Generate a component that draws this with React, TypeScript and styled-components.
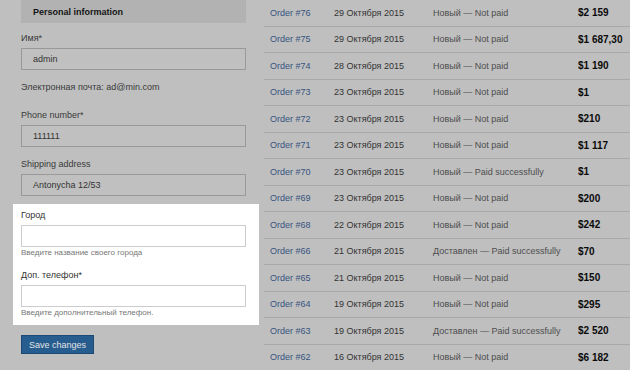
import styled, { createGlobalStyle } from 'styled-components';

const GlobalStyle = createGlobalStyle`
  html, body {
    margin: 0;
    padding: 0;
    background: #bfbfbf;
    font-family: 'Liberation Sans', Arial, sans-serif;
  }
`;

const Page = styled.div`
  display: flex;
  width: 630px;
  height: 370px;
  overflow: hidden;
  background: #bfbfbf;
`;

const Sidebar = styled.div`
  width: 246px;
  margin-left: 13px;
  display: flex;
  flex-direction: column;
`;

const Section = styled.div`
  display: flex;
  flex-direction: column;
  padding: 0 13px 0 8px;
`;

const Spotlight = styled(Section)`
  background: #ffffff;
  margin-top: 8px;
  padding-top: 4px;
  padding-bottom: 6px;
`;

const Header = styled.div`
  height: 23px;
  background: #b2b2b2;
  display: flex;
  align-items: center;
  padding-left: 12px;
  font-size: 9px;
  font-weight: bold;
  color: #141414;
  margin-bottom: 8px;
`;

const Label = styled.div<{ $gap?: number; $light?: boolean }>`
  font-size: 9px;
  line-height: 14px;
  color: ${(p) => (p.$light ? '#333333' : '#3a3a3a')};
  margin-top: ${(p) => p.$gap ?? 0}px;
  margin-bottom: 3px;
`;

const Text = styled.div<{ $gap?: number }>`
  font-size: 9px;
  line-height: 14px;
  color: #3a3a3a;
  margin-top: ${(p) => p.$gap ?? 0}px;
`;

const Input = styled.div<{ $light?: boolean }>`
  box-sizing: border-box;
  height: 22px;
  border: 1px solid ${(p) => (p.$light ? '#cccccc' : '#999999')};
  background: ${(p) => (p.$light ? '#ffffff' : '#c0c0c0')};
  display: flex;
  align-items: center;
  padding-left: 11px;
  font-size: 9px;
  color: #333333;
`;

const Hint = styled.div`
  font-size: 8px;
  line-height: 12px;
  color: #777777;
`;

const Button = styled.div`
  align-self: flex-start;
  margin: 10px 0 0 8px;
  box-sizing: border-box;
  height: 19px;
  padding: 0 7px;
  display: flex;
  align-items: center;
  background: #265c8e;
  border: 1px solid #1c4a74;
  color: #e4e4e4;
  font-size: 9px;
`;

const Table = styled.div`
  margin-left: 5px;
  flex: 1;
  display: flex;
  flex-direction: column;
`;

const Row = styled.div`
  box-sizing: border-box;
  height: 26.5px;
  flex-shrink: 0;
  display: grid;
  grid-template-columns: 64px 99px 145px 1fr;
  align-items: center;
  padding-left: 6px;
  border-bottom: 1px solid #a8a8a8;
  font-size: 9px;
  white-space: nowrap;
`;

const OrderLink = styled.span`
  color: #37547f;
`;

const DateCell = styled.span`
  color: #333333;
`;

const Status = styled.span`
  color: #4d4d4d;
`;

const Amount = styled.span`
  color: #0a0a0a;
  font-weight: bold;
  font-size: 10px;
`;

const orders = [
  ['76', '29 Октября 2015', 'Новый — Not paid', '$2 159'],
  ['75', '29 Октября 2015', 'Новый — Not paid', '$1 687,30'],
  ['74', '28 Октября 2015', 'Новый — Not paid', '$1 190'],
  ['73', '23 Октября 2015', 'Новый — Not paid', '$1'],
  ['72', '23 Октября 2015', 'Новый — Not paid', '$210'],
  ['71', '23 Октября 2015', 'Новый — Not paid', '$1 117'],
  ['70', '23 Октября 2015', 'Новый — Paid successfully', '$1'],
  ['69', '23 Октября 2015', 'Новый — Not paid', '$200'],
  ['68', '22 Октября 2015', 'Новый — Not paid', '$242'],
  ['66', '21 Октября 2015', 'Доставлен — Paid successfully', '$70'],
  ['65', '21 Октября 2015', 'Новый — Not paid', '$150'],
  ['64', '19 Октября 2015', 'Новый — Not paid', '$295'],
  ['63', '19 Октября 2015', 'Доставлен — Paid successfully', '$2 520'],
  ['62', '16 Октября 2015', 'Новый — Not paid', '$6 182'],
];

export default function App() {
  return (
    <Page>
      <GlobalStyle />
      <Sidebar>
        <Section>
          <Header>Personal information</Header>
          <Label>Имя*</Label>
          <Input>admin</Input>
          <Text $gap={10}>Электронная почта: ad@min.com</Text>
          <Label $gap={14}>Phone number*</Label>
          <Input>111111</Input>
          <Label $gap={10}>Shipping address</Label>
          <Input>Antonycha 12/53</Input>
        </Section>
        <Spotlight>
          <Label $light>Город</Label>
          <Input $light />
          <Hint>Введите название своего города</Hint>
          <Label $light $gap={9}>Доп. телефон*</Label>
          <Input $light />
          <Hint>Введите дополнительный телефон.</Hint>
        </Spotlight>
        <Button>Save changes</Button>
      </Sidebar>
      <Table>
        {orders.map(([num, date, status, amount]) => (
          <Row key={num}>
            <OrderLink>Order #{num}</OrderLink>
            <DateCell>{date}</DateCell>
            <Status>{status}</Status>
            <Amount>{amount}</Amount>
          </Row>
        ))}
      </Table>
    </Page>
  );
}
